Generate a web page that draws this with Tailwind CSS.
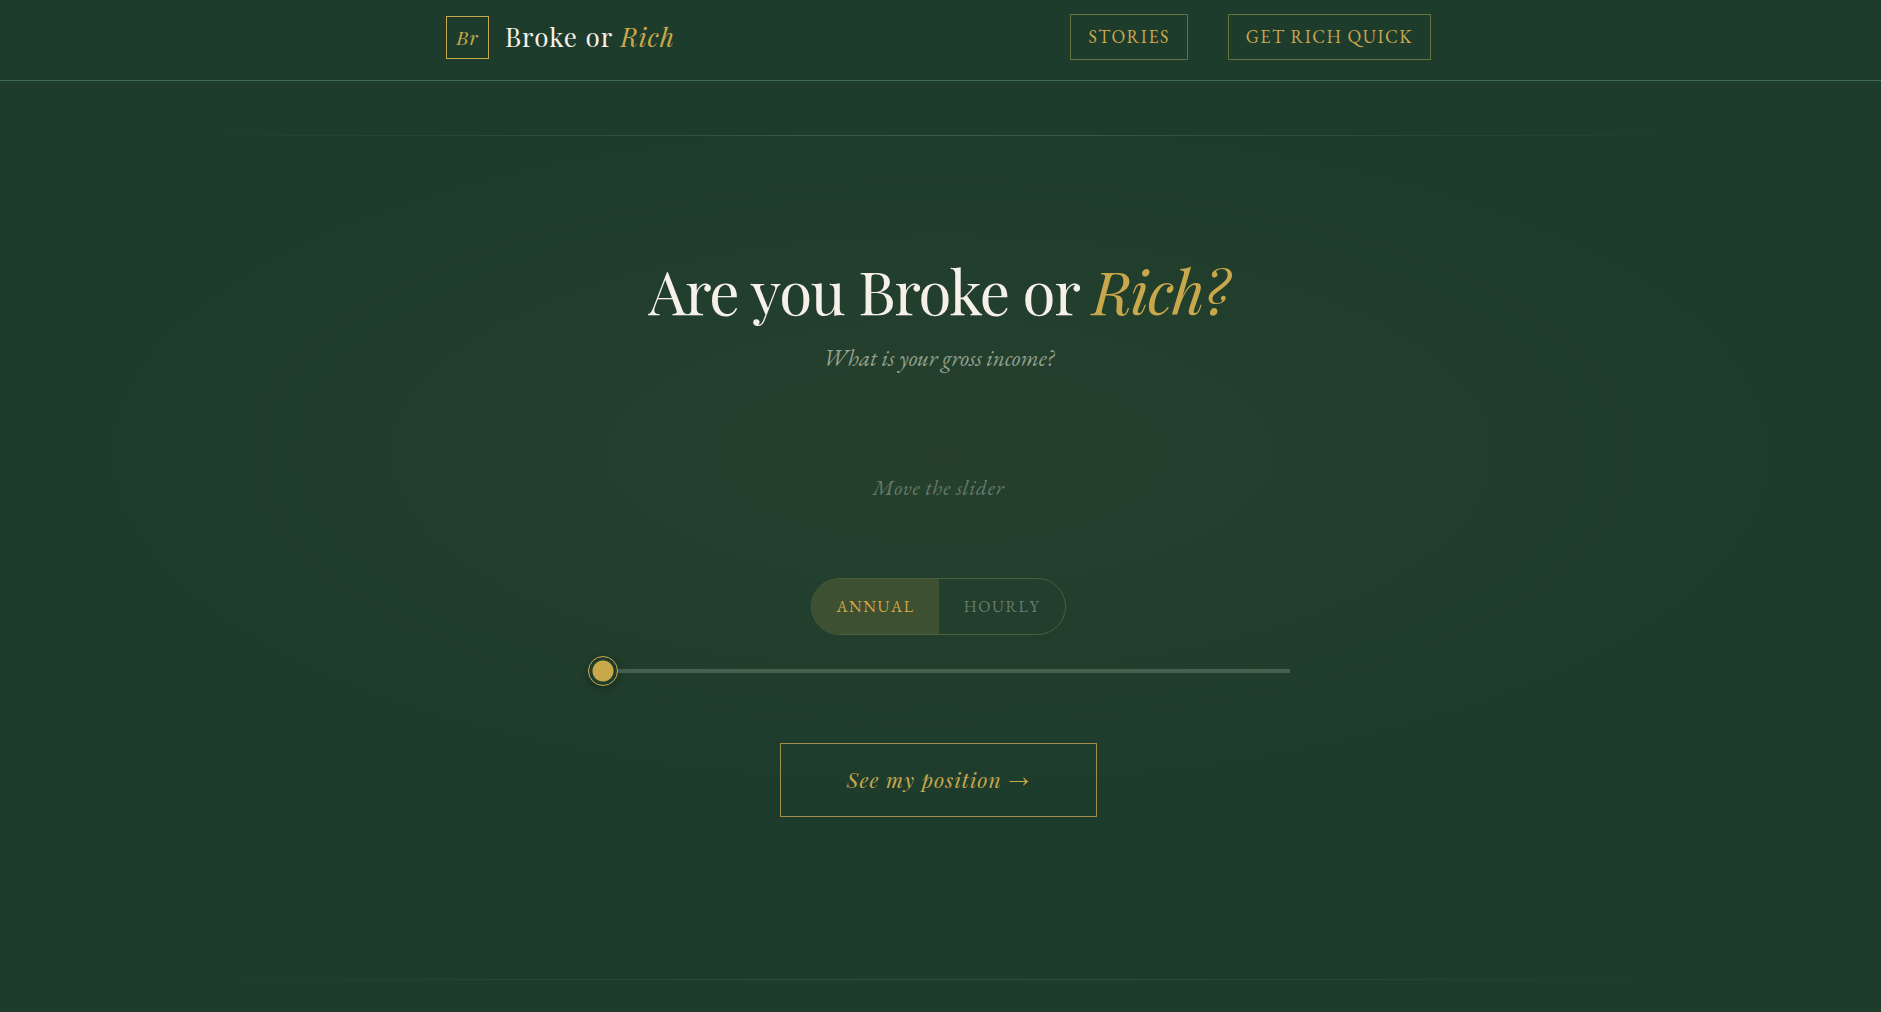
<!DOCTYPE html>
<html lang="en">
<head>
<meta charset="UTF-8">
<meta name="viewport" content="width=device-width, initial-scale=1.0">
<title>Broke or Rich</title>
<script src="https://cdn.jsdelivr.net/npm/@tailwindcss/browser@4"></script>
<style>
  /* Gold coin thumb with a thin outer ring */
  #income { appearance: none; height: 4px; background: #46624f; cursor: pointer; }
  #income::-webkit-slider-thumb { appearance: none; width: 30px; height: 30px; border-radius: 50%; border: 1px solid #c9a84c; background: radial-gradient(circle, #c9a84c 0 10px, #1f3d2c 11px); box-shadow: 0 2px 8px rgba(0, 0, 0, .3); }
  #income::-moz-range-thumb { width: 28px; height: 28px; border-radius: 50%; border: 1px solid #c9a84c; background: radial-gradient(circle, #c9a84c 0 10px, #1f3d2c 11px); }
</style>
</head>
<body class="min-h-screen flex flex-col bg-[#1e3c2c] text-[#f5f0e8] font-['Playfair_Display','Liberation_Serif',serif]">
<header class="pr-1 border-b border-[#3f6b54]">
  <div class="max-w-[985px] mx-auto h-20 pb-1.5 flex items-center justify-between">
    <a href="#" class="flex items-center gap-4">
      <span class="size-[43px] flex items-center justify-center border border-[#c9a84c] text-[#c9a84c] text-[19px] italic tracking-wider">Br</span>
      <span class="text-[26px] leading-8 tracking-[0.04em]">Broke or <em class="text-[#c9a84c]">Rich</em></span>
    </a>
    <nav class="flex gap-10 font-['EB_Garamond','Liberation_Serif',serif] text-lg uppercase tracking-[0.08em] text-[#c9a84c]">
      <a href="#stories" class="h-[46px] px-[17px] flex items-center border border-[#65743f]">Stories</a>
      <a href="#quick" class="h-[46px] px-[17px] flex items-center border border-[#65743f]">Get Rich Quick</a>
    </nav>
  </div>
</header>
<main class="flex-1 flex flex-col items-center pr-1 bg-[radial-gradient(ellipse_45%_36%_at_50%_40%,#26402d_0%,#1e3c2c_100%)]">
  <div class="mt-[54px] w-4/5 h-px bg-linear-to-r from-transparent via-[#3a5f45] to-transparent"></div>
  <h1 class="mt-[114px] text-6xl leading-20 tracking-[-0.02em]">Are you Broke or <em class="text-[#c9a84c]">Rich?</em></h1>
  <p class="mt-3 font-['EB_Garamond','Liberation_Serif',serif] text-[23px] leading-8 italic text-[#94a390]">What is your gross income?</p>
  <p class="mt-[98px] font-['EB_Garamond','Liberation_Serif',serif] text-[21px] leading-8 italic tracking-[0.04em] text-[#667c69]"><label for="income">Move the slider</label></p>
  <div class="mt-[74px] flex h-[57px] rounded-full overflow-hidden border border-[#4c5f3a] font-['EB_Garamond','Liberation_Serif',serif] text-base tracking-widest">
    <button type="button" class="w-[127px] uppercase bg-[#3d5032] text-[#d4a843] cursor-pointer">Annual</button>
    <button type="button" class="w-[126px] uppercase text-[#687f6d] cursor-pointer">Hourly</button>
  </div>
  <input id="income" type="range" min="0" max="100" value="0" class="mt-[34px] w-[702px] max-w-full">
  <button type="button" class="mt-[70px] w-[317px] h-[74px] border border-[#a08f45] text-[#c9a84c] text-[21px] italic tracking-wider cursor-pointer">See my position <span class="font-['EB_Garamond','Liberation_Serif',serif] not-italic">→</span></button>
  <div class="mt-auto mb-8 w-4/5 h-px bg-linear-to-r from-transparent via-[#31513a] to-transparent"></div>
</main>
</body>
</html>
